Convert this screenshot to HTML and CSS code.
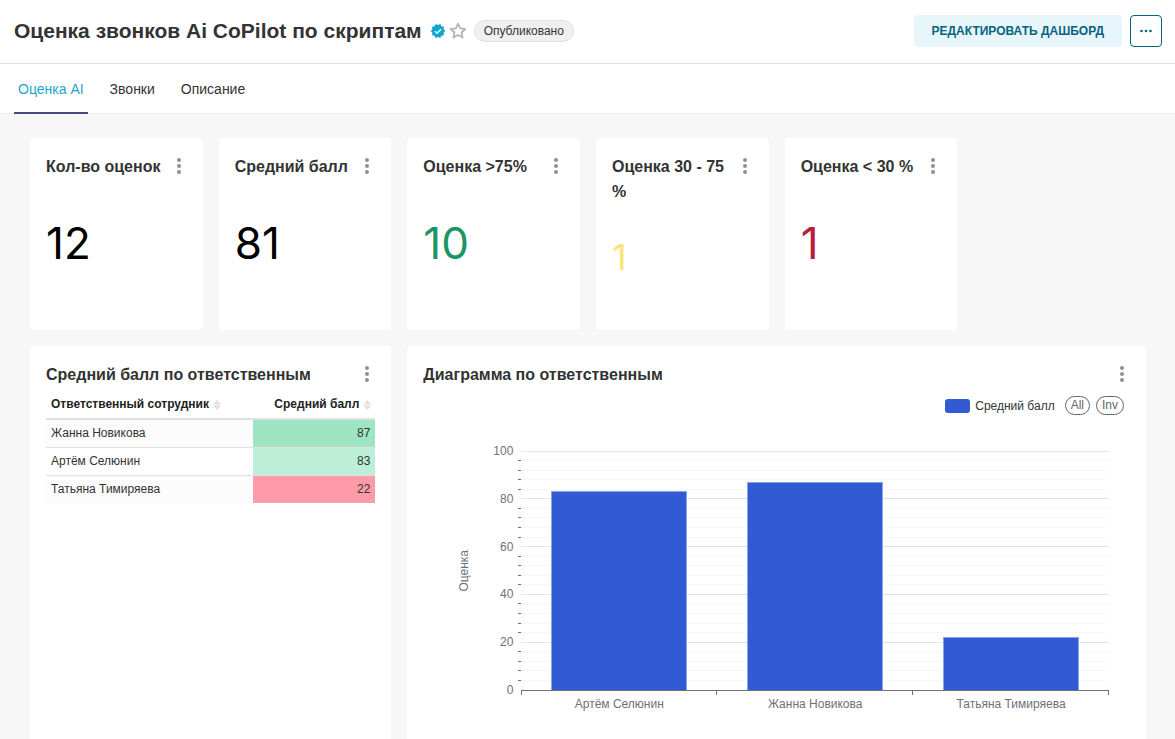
FILE: index.html
```html
<!DOCTYPE html>
<html lang="ru">
<head>
    <meta charset="UTF-8">
    <meta name="viewport" content="width=device-width, initial-scale=1.0">
    <title>Оценка звонков Ai CoPilot по скриптам</title>
    <link rel="stylesheet" href="styles.css">
</head>
<body>

<header class="header">
    <h1>Оценка звонков Ai CoPilot по скриптам</h1>
    <svg class="verified" viewBox="0 0 24 24" width="16" height="16" aria-hidden="true">
        <path fill="#0fa7d0" d="M23 12l-2.440-2.780.34-3.680-3.610-.82-1.890-3.180L12 3 8.600 1.540 6.710 4.720l-3.610.81.34 3.680L1 12l2.440 2.780-.34 3.690 3.610.82 1.890 3.180L12 21l3.400 1.460 1.890-3.180 3.610-.82-.34-3.680L23 12z"/>
        <path fill="none" stroke="#fff" stroke-width="2" d="M7.500 12.300l3 3 6-6"/>
    </svg>
    <button class="star" aria-label="Добавить в избранное">
        <svg viewBox="0 0 18 18" width="18" height="18">
            <path fill="none" stroke="#b2b2b2" stroke-width="1.700" stroke-linejoin="round" d="M9 1.700l2.200 4.700 5.200.6-3.900 3.500 1.100 5.100L9 13l-4.600 2.600 1.100-5.100L1.600 7l5.200-.6z"/>
        </svg>
    </button>
    <span class="status">Опубликовано</span>
    <div class="actions">
        <button class="edit">Редактировать дашборд</button>
        <button class="more" aria-label="Ещё">
            <svg viewBox="0 0 14 4" width="14" height="4" fill="#05647d">
                <circle cx="2.500" cy="2" r="1.300"/>
                <circle cx="7" cy="2" r="1.300"/>
                <circle cx="11.500" cy="2" r="1.300"/>
            </svg>
        </button>
    </div>
</header>

<nav class="tabs">
    <a href="#ocenka" class="active">Оценка AI</a>
    <a href="#zvonki">Звонки</a>
    <a href="#opisanie">Описание</a>
</nav>

<main class="board">
    <section class="card">
        <div class="card-head">
            <h2>Кол-во оценок</h2>
            <button class="dots" aria-label="Меню"><i></i><i></i><i></i></button>
        </div>
        <div class="number">12</div>
    </section>
    <section class="card">
        <div class="card-head">
            <h2>Средний балл</h2>
            <button class="dots" aria-label="Меню"><i></i><i></i><i></i></button>
        </div>
        <div class="number">81</div>
    </section>
    <section class="card">
        <div class="card-head">
            <h2>Оценка &gt;75%</h2>
            <button class="dots" aria-label="Меню"><i></i><i></i><i></i></button>
        </div>
        <div class="number green">10</div>
    </section>
    <section class="card">
        <div class="card-head">
            <h2>Оценка 30 - 75 %</h2>
            <button class="dots" aria-label="Меню"><i></i><i></i><i></i></button>
        </div>
        <div class="number yellow">1</div>
    </section>
    <section class="card">
        <div class="card-head">
            <h2>Оценка &lt; 30 %</h2>
            <button class="dots" aria-label="Меню"><i></i><i></i><i></i></button>
        </div>
        <div class="number red">1</div>
    </section>

    <section class="card card-table">
        <div class="card-head">
            <h2>Средний балл по ответственным</h2>
            <button class="dots" aria-label="Меню"><i></i><i></i><i></i></button>
        </div>
        <table>
            <thead>
                <tr>
                    <th>Ответственный сотрудник<span class="sort"></span></th>
                    <th class="num">Средний балл<span class="sort"></span></th>
                </tr>
            </thead>
            <tbody>
                <tr><td>Жанна Новикова</td><td class="num high">87</td></tr>
                <tr><td>Артём Селюнин</td><td class="num mid">83</td></tr>
                <tr><td>Татьяна Тимиряева</td><td class="num low">22</td></tr>
            </tbody>
        </table>
    </section>

    <section class="card card-chart">
        <div class="card-head">
            <h2>Диаграмма по ответственным</h2>
            <button class="dots" aria-label="Меню"><i></i><i></i><i></i></button>
        </div>
        <div class="legend">
            <span class="swatch"></span>
            <span class="legend-name">Средний балл</span>
            <button>All</button>
            <button>Inv</button>
        </div>
        <div class="chart">
            <div class="axis-name">Оценка</div>
            <div class="axis-y">
                <span>100</span><span>80</span><span>60</span><span>40</span><span>20</span><span>0</span>
            </div>
            <svg class="plot" id="plot"></svg>
            <div class="axis-x" id="axis-x"></div>
        </div>
    </section>
</main>

<script src="chart.js"></script>
</body>
</html>
```
FILE: styles.css
```css
* {
    box-sizing: border-box;
}
body {
    margin: 0;
    min-height: 100vh;
    display: flex;
    flex-direction: column;
    background-color: #f7f7f7;
    color: #333;
    font-family: "Liberation Sans", Arial, sans-serif;
    font-size: 14px;
}
button {
    font-family: inherit;
    padding: 0;
    border: none;
    background: none;
    cursor: pointer;
}
svg {
    display: block;
}

/* Шапка */
.header {
    display: flex;
    align-items: center;
    height: 64px;
    padding: 0 13px 2px 14px;
    background-color: white;
    border-bottom: 1px solid #e0e0e0;
}
h1 {
    margin: 0 8px 0 0;
    font-size: 21px;
    font-weight: bold;
}
.star {
    margin: 0 7px 0 3px;
}
.status {
    padding: 0 9px;
    border: 1px solid #e0e0e0;
    border-radius: 11px;
    background-color: #f0f0f0;
    font-size: 12px;
    line-height: 20px;
}
.actions {
    display: flex;
    gap: 8px;
    margin-left: auto;
}
.edit {
    height: 32px;
    padding: 0 18px;
    border-radius: 4px;
    background-color: #e7f6fa;
    color: #05647d;
    font-size: 12px;
    font-weight: bold;
    text-transform: uppercase;
}
.more {
    display: flex;
    align-items: center;
    justify-content: center;
    width: 32px;
    height: 32px;
    border: 1px solid #05647d;
    border-radius: 4px;
}

/* Вкладки */
.tabs {
    display: flex;
    gap: 18px;
    height: 50px;
    padding-left: 14px;
    background-color: white;
    border-bottom: 1px solid #f0f0f0;
}
.tabs a {
    padding: 0 4px;
    height: 50px;
    border-bottom: 2px solid transparent;
    color: #333;
    line-height: 50px;
    text-decoration: none;
}
.tabs .active {
    border-color: #484c80;
    color: #20a7c9;
}

/* Сетка дашборда */
.board {
    flex: 1;
    display: grid;
    grid-template-columns: repeat(6, 1fr);
    grid-template-rows: 192px 1fr;
    gap: 16px;
    padding: 24px 29px 0 30px;
}
.card {
    display: flex;
    flex-direction: column;
    padding: 16px;
    border-radius: 4px;
    background-color: white;
}
.card-head {
    display: flex;
    justify-content: space-between;
    align-items: flex-start;
}
h2 {
    margin: 0;
    font-size: 16px;
    font-weight: bold;
    line-height: 25px;
}
.dots {
    flex: none;
    display: flex;
    flex-direction: column;
    align-items: center;
    gap: 2px;
    width: 16px;
    padding-top: 4px;
}
.dots i {
    width: 4px;
    height: 4px;
    border-radius: 50%;
    background-color: #879399;
}
.number {
    margin-top: 37px;
    color: black;
    font-family: Inter, sans-serif;
    font-optical-sizing: none;
    font-size: 44px;
    line-height: 54px;
}
.green {
    color: #1a9568;
}
.yellow {
    margin-top: 31px;
    color: #fde374;
    font-size: 36px;
    line-height: 44px;
}
.red {
    color: #b81f3a;
}

/* Таблица */
.card-table {
    grid-column: 1 / span 2;
    border-radius: 4px 4px 0 0;
}
table {
    width: 100%;
    margin-top: 4px;
    border-collapse: collapse;
    font-size: 12px;
    line-height: 17px;
}
th {
    padding: 5px 4px 5px 5px;
    border-bottom: 2px solid #e0e0e0;
    color: #222;
    text-align: left;
}
td {
    padding: 5px;
    border-top: 1px solid #e0e0e0;
}
tbody tr:nth-child(odd) {
    background-color: #fcfcfc;
}
.num {
    width: 37%;
    text-align: right;
}
.high {
    background-color: #9de5c3;
}
.mid {
    background-color: #bdeed8;
}
.low {
    background-color: #fd9ca8;
}
.sort {
    display: inline-block;
    width: 8px;
    height: 10px;
    margin-left: 4px;
    vertical-align: -2px;
    background-color: #e0e0e0;
    clip-path: polygon(50% 0, 100% 45%, 0 45%, 0 55%, 100% 55%, 50% 100%, 0 55%, 0 45%);
}

/* Диаграмма */
.card-chart {
    grid-column: 3 / span 4;
    border-radius: 4px 4px 0 0;
}
.legend {
    display: flex;
    justify-content: flex-end;
    align-items: center;
    margin-top: 9px;
    padding-right: 6px;
    font-size: 12px;
    line-height: 18px;
}
.swatch {
    width: 25px;
    height: 14px;
    border-radius: 3px;
    background-color: #325bd3;
}
.legend-name {
    margin: 0 10px 0 5px;
}
.legend button {
    height: 19px;
    padding: 0 5px;
    border: 1px solid #666;
    border-radius: 10px;
    color: #666;
    font-size: 12px;
    line-height: 17px;
}
.legend button + button {
    margin-left: 6px;
}
.chart {
    display: grid;
    grid-template-columns: 14px 34px 1fr;
    column-gap: 8px;
    margin-top: 36px;
    padding: 0 21px 0 34px;
    color: #6e7079;
    font-size: 12px;
    line-height: 14px;
}
.axis-name {
    align-self: center;
    justify-self: center;
    writing-mode: vertical-rl;
    transform: rotate(180deg);
}
.axis-y {
    display: flex;
    flex-direction: column;
    justify-content: space-between;
    margin: -7px 0;
    text-align: right;
}
.plot {
    width: 100%;
    height: 239px;
    overflow: visible;
    shape-rendering: crispEdges;
}
.plot .major {
    stroke: #e0e6f1;
}
.plot .minor {
    stroke: #f4f7fd;
}
.plot .axis {
    stroke: #6e7079;
}
.plot .bar {
    fill: #325bd3;
    stroke: #8ba3e8;
}
.axis-x {
    grid-column: 3;
    display: grid;
    grid-template-columns: repeat(3, 1fr);
    margin-top: 7px;
    text-align: center;
}
```
FILE: chart.js
```js
const data = [
    { name: 'Артём Селюнин', value: 83 },
    { name: 'Жанна Новикова', value: 87 },
    { name: 'Татьяна Тимиряева', value: 22 }
];

const plot = document.getElementById('plot');
const axisX = document.getElementById('axis-x');
const step = 100 / data.length;
let svg = '';

// Линии сетки: основные через 20, промежуточные через 4
for (let v = 4; v <= 100; v += 4) {
    const y = `${100 - v}%`;
    const major = v % 20 === 0;
    svg += `<line class="${major ? 'major' : 'minor'}" x1="0" x2="100%" y1="${y}" y2="${y}"/>`;
    if (!major) {
        svg += `<line class="axis" x1="-3" x2="0" y1="${y}" y2="${y}"/>`;
    }
}

data.forEach((item, i) => {
    svg += `<rect class="bar" x="${step * (i + 0.155)}%" y="${100 - item.value}%" width="${step * 0.69}%" height="${item.value}%"/>`;
    axisX.innerHTML += `<span>${item.name}</span>`;
});

svg += '<line class="axis" x1="0" x2="100%" y1="100%" y2="100%"/>';
for (let i = 0; i <= data.length; i++) {
    svg += `<svg x="${step * i}%" y="100%" overflow="visible"><line class="axis" x1="0" x2="0" y1="0" y2="5"/></svg>`;
}
plot.innerHTML = svg;
```
